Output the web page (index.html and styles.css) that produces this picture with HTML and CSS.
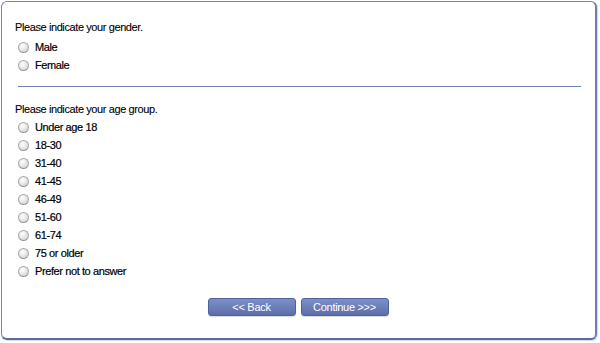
FILE: index.html
```html
<!DOCTYPE html>
<html lang="en">
<head>
    <meta charset="UTF-8">
    <title>Survey</title>
    <link rel="stylesheet" href="styles.css">
</head>
<body>

<div class="panel">
    <!-- Gender question -->
    <div class="question">
        <div class="question-text">Please indicate your gender.</div>
        <label class="option"><input type="radio" name="gender"><span>Male</span></label>
        <label class="option"><input type="radio" name="gender"><span>Female</span></label>
    </div>

    <hr class="divider">

    <!-- Age question -->
    <div class="question">
        <div class="question-text">Please indicate your age group.</div>
        <label class="option"><input type="radio" name="age"><span>Under age 18</span></label>
        <label class="option"><input type="radio" name="age"><span>18-30</span></label>
        <label class="option"><input type="radio" name="age"><span>31-40</span></label>
        <label class="option"><input type="radio" name="age"><span>41-45</span></label>
        <label class="option"><input type="radio" name="age"><span>46-49</span></label>
        <label class="option"><input type="radio" name="age"><span>51-60</span></label>
        <label class="option"><input type="radio" name="age"><span>61-74</span></label>
        <label class="option"><input type="radio" name="age"><span>75 or older</span></label>
        <label class="option"><input type="radio" name="age"><span>Prefer not to answer</span></label>
    </div>

    <div class="buttons">
        <button class="nav-button">&lt;&lt; Back</button>
        <button class="nav-button">Continue &gt;&gt;&gt;</button>
    </div>
</div>

</body>
</html>
```

FILE: styles.css
```css
body {
    font-family: "Liberation Sans", Arial, sans-serif;
    font-size: 11px;
    letter-spacing: -0.4px;
    margin: 0;
    padding: 1px 3px 2px 1px;
    background-color: #ffffff;
    color: #000;
}

.panel {
    height: 339px;
    box-sizing: border-box;
    border: 1px solid #7283bb;
    border-bottom: 2px solid #5a6a9e;
    border-right: 2px solid #6c7cb2;
    border-radius: 6px;
    padding: 16px 14px 0 13px;
    box-shadow: 1px 1px 1px rgba(0,0,0,0.15);
}

.question-text {
    line-height: 18px;
    color: #000;
    -webkit-text-stroke: 0.1px #000;
}

.question .question-text {
    margin-bottom: 2px;
}

.question + .divider + .question .question-text {
    margin-bottom: 0;
}

.option {
    display: flex;
    align-items: center;
    height: 18px;
    padding-left: 3px;
}

.option span {
    margin-left: 6px;
    -webkit-text-stroke: 0.2px #000;
}

/* Grey old-style radio button */
.option input {
    appearance: none;
    -webkit-appearance: none;
    width: 11px;
    height: 11px;
    margin: 1px 0 0 0;
    border: 1px solid #a8a8a8;
    border-bottom-color: #959595;
    border-radius: 50%;
    background: radial-gradient(circle at 40% 35%, #ffffff 0%, #e8e8e8 45%, #c8c8c8 100%);
}

.divider {
    border: none;
    height: 1px;
    background-color: #7080b8;
    margin: 12px 0 13px 3px;
}

.buttons {
    display: flex;
    justify-content: center;
    gap: 5px;
    margin-top: 18px;
}

.nav-button {
    width: 88px;
    height: 18px;
    padding: 0;
    font-family: "Liberation Sans", Arial, sans-serif;
    font-size: 11px;
    letter-spacing: -0.3px;
    color: #ffffff;
    border: 1px solid #4f609c;
    border-radius: 3px;
    background: linear-gradient(#7d8fc6, #5c6fab);
    box-shadow: 0 1px 1px rgba(0,0,0,0.15);
    cursor: pointer;
}
```
